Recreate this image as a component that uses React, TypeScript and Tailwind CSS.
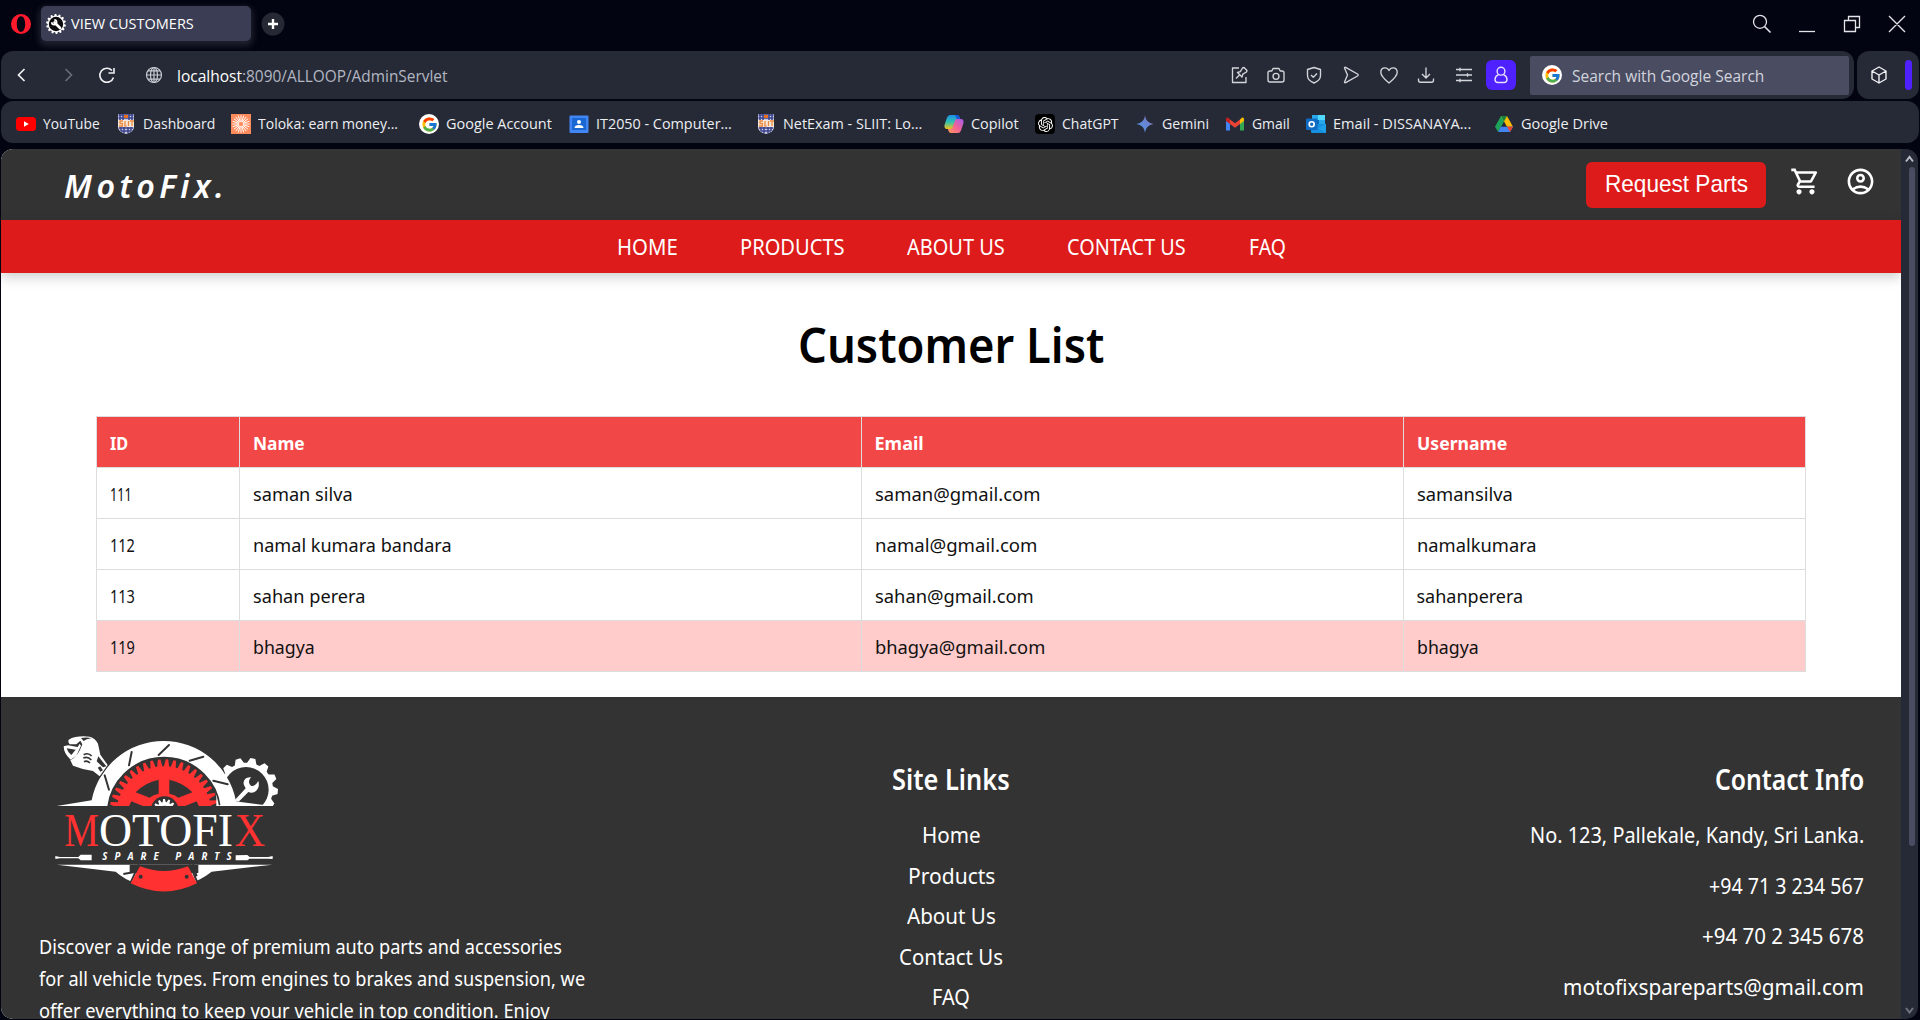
import React, { useLayoutEffect, useRef, useState } from "react";
import { MdOutlineShoppingCart, MdOutlineAccountCircle } from "react-icons/md";
import { FcGoogle } from "react-icons/fc";
import { SiOpenai } from "react-icons/si";

/* Condenses or widens one line of text so that it fills the given width. */
function Fit({ w, children, className = "" }: { w: number; children: React.ReactNode; className?: string }) {
  const ref = useRef<HTMLSpanElement>(null);
  const [k, setK] = useState(1);
  useLayoutEffect(() => {
    if (ref.current) setK(w / ref.current.offsetWidth);
  }, [w]);
  return (
    <span className={`inline-block shrink-0 whitespace-nowrap ${className}`} style={{ width: w }}>
      <span ref={ref} className="inline-block origin-left" style={{ transform: `scaleX(${k})` }}>
        {children}
      </span>
    </span>
  );
}

const toothRing = (cx: number, cy: number, r1: number, r2: number, n: number, from = 0, to = 360) => {
  const pts: string[] = [];
  const step = (to - from) / n;
  for (let i = 0; i < n; i++) {
    const a = from + i * step;
    const corners: [number, number][] = [[0, r1], [0.22, r2], [0.55, r2], [0.75, r1]];
    for (const [f, r] of corners) {
      const t = ((a + f * step) * Math.PI) / 180;
      pts.push(`${(cx + r * Math.cos(t)).toFixed(2)},${(cy + r * Math.sin(t)).toFixed(2)}`);
    }
  }
  return pts.join(" ");
};

function GoogleBadge() {
  return (
    <span className="flex size-5 items-center justify-center rounded-full bg-white">
      <FcGoogle size={17} />
    </span>
  );
}

function Crest() {
  return (
    <svg width="20" height="20" viewBox="0 0 20 20">
      <path d="M2 0h16v13q0 5-8 7-8-2-8-7z" fill="#c9cbe0" />
      <path d="M2.500 1h15M2.500 4h15M3 14h14M5 17h10M4 0v6M7 0v6M13 0v6M16 0v6M5 13v4M8 13v6M12 13v6M15 13v4" stroke="#3a438d" strokeWidth="1.500" />
      <path d="M8 1h4v3H8z" fill="#e8701c" />
      <path d="M2 6h16v7H2z" fill="#f6e7dc" />
      <path d="M7 7H4v2.500h2.500V12H3M9 7v5h1.500M12.500 7v5M14 7h4M16 7v5" stroke="#e88a3d" strokeWidth="1.300" fill="none" />
    </svg>
  );
}

const YouTube = () => (
  <svg width="20" height="20" viewBox="0 0 20 20">
    <rect y="3" width="20" height="14" rx="3.500" fill="#f00" />
    <path d="M8 7.200v5.600l4.800-2.800z" fill="#fff" />
  </svg>
);
const Toloka = () => (
  <svg width="20" height="20" viewBox="0 0 20 20">
    <path fill="#ff8a5c" d="M0 0h20v20H0z" />
    {Array.from({ length: 20 }, (_, i) => (
      <path key={i} d="M10 7.800V1.200" stroke="#fff" strokeWidth=".9" transform={`rotate(${i * 18} 10 10)`} />
    ))}
  </svg>
);
const Classroom = () => (
  <svg width="20" height="20" viewBox="0 0 20 20">
    <rect x=".5" y="1.500" width="19" height="17.500" rx="1" fill="#4285f4" />
    <path d="M3 4h14v12H3z" fill="#1967d2" />
    <circle cx="10" cy="8" r="2" fill="#fff" />
    <path d="M5.500 14q0-3 4.500-3t4.500 3z" fill="#fff" />
  </svg>
);
const Copilot = () => (
  <svg width="20" height="20" viewBox="0 0 20 20">
    <defs>
      <linearGradient id="cpA" x1="0" y1="0" x2="0" y2="1">
        <stop stopColor="#1d8fe8" />
        <stop offset=".5" stopColor="#2fc3b0" />
        <stop offset="1" stopColor="#f3c21b" />
      </linearGradient>
      <linearGradient id="cpB" x1="1" y1="0" x2="0" y2="1">
        <stop stopColor="#a35cf0" />
        <stop offset=".5" stopColor="#f0619a" />
        <stop offset="1" stopColor="#ff9a55" />
      </linearGradient>
    </defs>
    <path d="M6 1h7q2 0 2.500 2l.6 2H14q-2 0-2.600 2L9 13.500Q8.500 15 7 15H3Q0 15 .5 11L3 3.500Q4 1 6 1z" fill="url(#cpA)" />
    <path d="M11 1h2q2 0 2.500 2l.6 2H13z" fill="#1557d6" />
    <path d="M14 19H7q-2 0-2.500-2L4 15h2.500q1.600 0 2.200-2L11 6.500Q11.500 5 13 5h4q3 0 2.500 4L17 16.500Q16 19 14 19z" fill="url(#cpB)" />
  </svg>
);
const ChatGpt = () => (
  <span className="flex size-5 items-center justify-center rounded bg-black text-white">
    <SiOpenai size={15} />
  </span>
);
const Gemini = () => (
  <svg width="20" height="20" viewBox="0 0 20 20">
    <defs>
      <linearGradient id="gm" x1="0" y1="1" x2="1" y2="0">
        <stop stopColor="#4a9be8" />
        <stop offset=".6" stopColor="#6a83d0" />
        <stop offset="1" stopColor="#b06a9c" />
      </linearGradient>
    </defs>
    <path d="M10 1.500Q11 9 18.500 10 11 11 10 18.500 9 11 1.500 10 9 9 10 1.500z" fill="url(#gm)" />
  </svg>
);
const Gmail = () => (
  <svg width="20" height="20" viewBox="0 0 20 20">
    <path d="M1 5v11.500h4V9z" fill="#4285f4" />
    <path d="M19 5v11.500h-4V9z" fill="#34a853" />
    <path d="M15 5.500V10l4-3V5q0-1.800-1.800-1.500z" fill="#fbbc04" />
    <path d="M1 5v2l4 3V5.500L2.800 3.500Q1 3.200 1 5z" fill="#c5221f" />
    <path d="M5 5.500V10l5 3.700 5-3.700V5.500l-5 3.800z" fill="#ea4335" />
  </svg>
);
const Outlook = () => (
  <svg width="20" height="20" viewBox="0 0 20 20">
    <path d="M6 1h13v10H6z" fill="#28a8ea" />
    <path d="M12 1h7v5h-7z" fill="#50d9ff" />
    <path d="M6 6h7v5H6z" fill="#0364b8" />
    <path d="M5 10h15v9H6q-1 0-1-1z" fill="#1490df" />
    <path d="M20 9.500 12 14.500l8 4.500z" fill="#1f9fe8" />
    <rect y="4.500" width="11.500" height="11.500" rx="1" fill="#0f6cc4" />
    <circle cx="5.700" cy="10.200" r="2.500" stroke="#fff" strokeWidth="1.600" fill="none" />
  </svg>
);
const Drive = () => (
  <svg width="20" height="20" viewBox="0 0 20 20">
    <path d="M7 2h6L10 7.500 4.200 18 1 12.800z" fill="#1ea35a" />
    <path d="M7 2h6l6 10.800h-6z" fill="#fbbc04" />
    <path d="M7 2h6l-3 5.500z" fill="#188038" />
    <path d="M6.800 12.800H19L16 18H4.200z" fill="#4285f4" />
    <path d="M13 12.800h6L16 18z" fill="#ea4335" />
  </svg>
);

const bookmarks = [
  { label: "YouTube", w: 57, box: "w-[100px]", icon: <YouTube /> },
  { label: "Dashboard", w: 72, box: "w-[115px]", icon: <Crest /> },
  { label: "Toloka: earn money...", w: 140, box: "w-[188px]", icon: <Toloka /> },
  { label: "Google Account", w: 106, box: "w-[150px]", icon: <GoogleBadge /> },
  { label: "IT2050 - Computer...", w: 136, box: "w-[187px]", icon: <Classroom /> },
  { label: "NetExam - SLIIT: Lo...", w: 139, box: "w-[188px]", icon: <Crest /> },
  { label: "Copilot", w: 48, box: "w-[91px]", icon: <Copilot /> },
  { label: "ChatGPT", w: 57, box: "w-[100px]", icon: <ChatGpt /> },
  { label: "Gemini", w: 47, box: "w-[90px]", icon: <Gemini /> },
  { label: "Gmail", w: 38, box: "w-[81px]", icon: <Gmail /> },
  { label: "Email - DISSANAYA...", w: 138, box: "w-[188px]", icon: <Outlook /> },
  { label: "Google Drive", w: 87, box: "w-[130px]", icon: <Drive /> },
];

const toolPaths = [
  "M9 2H2.500v14.500H16V11M6 12.500l3.500-3.500M7.500 6.500l4.500 4.500.8-2.800L16.500 6l.5-1.500-3-3L12.500 2 10.300 5.700z",
  "M1 7q0-2 2-2h1.800L6 2.500h6L13.200 5H15q2 0 2 2v7q0 2-2 2H3q-2 0-2-2zM12 10.300a3 3 0 1 1-6 0 3 3 0 0 1 6 0z",
  "M9 1.500 15.500 3.500V9.500q0 5-6.500 7.500-6.500-2.500-6.500-7.500V3.500zM6 9l2.300 2.300L12 7.500",
  "M2.500 2q0-1 1.200-.6L15.500 8q1.500 1 0 2L3.700 16.600Q2.500 17 2.500 16L5.500 9z",
  "M9 17Q.8 10.500.8 6.300.8 1.800 5 1.800q2.700 0 4 2.700 1.300-2.700 4-2.700 4.200 0 4.200 4.500Q17.200 10.500 9 17z",
  "M9 1.500v10M5 8l4 4 4-4M1.500 12.500v1.800Q1.500 16.200 3.500 16.200h11q2 0 2-1.900V12.500",
  "M1 3.500h16M1 9h16M1 14.500h16M5 1.800v3.400M12.500 7.300v3.400M5 12.800v3.400",
];

function Browser() {
  return (
    <div className="font-['Open_Sans','Noto_Sans',sans-serif]">
      <div className="flex h-[51px] items-start">
        <svg className="mt-[14px] ml-[11px]" width="20" height="20" viewBox="0 0 20 20">
          <path fillRule="evenodd" fill="#ff1b2d" d="M10 0a10 10 0 1 0 0 20 10 10 0 0 0 0-20zm0 2.200c2.600 0 4.200 3.400 4.200 7.800s-1.600 7.800-4.200 7.800S5.800 14.400 5.800 10 7.400 2.200 10 2.200z" />
        </svg>
        <div className="mt-[6px] ml-[10px] flex h-[35px] w-[210px] items-center rounded-[5px] bg-[#3a3d53] pl-[5px] text-[14.5px] leading-[35px] text-white shadow-[0_3px_6px_2px_#20222f]">
          <svg className="mr-[5px] shrink-0" width="20" height="20" viewBox="0 0 20 20">
            <polygon points={toothRing(10, 10, 8.3, 10, 14)} fill="#fff" />
            <circle cx="10" cy="10" r="7.200" fill="#0a0a0c" />
            <path d="M8.500 8.500 14 14" stroke="#fff" strokeWidth="2.600" strokeLinecap="round" />
            <path d="M5.800 8.200a2.400 2.400 0 1 0 2.500-2.400" stroke="#fff" strokeWidth="1.700" fill="none" />
          </svg>
          <Fit w={123}>VIEW CUSTOMERS</Fit>
        </div>
        <svg className="mt-3 ml-[10px]" width="24" height="24" viewBox="0 0 24 24">
          <circle cx="12" cy="12" r="11.500" fill="#262934" />
          <path d="M12 7v10M7 12h10" stroke="#fff" strokeWidth="2.400" />
        </svg>
        <svg className="ml-auto mr-[14px] mt-[14px]" width="154" height="20" viewBox="0 0 154 20" fill="none" stroke="#e4e5ea" strokeWidth="1.300">
          <circle cx="8" cy="7.800" r="6.500" />
          <path d="m12.500 12.500 6 6" strokeWidth="1.600" />
          <path d="M47 17.500h16" />
          <path d="M92.500 6.500h11v11h-11zM96.500 6.500v-4h11v11h-4M137 2l16 16M153 2l-16 16" />
        </svg>
      </div>

      <div className="flex h-12 gap-[3px] px-px">
        <div className="flex grow items-center rounded-xl bg-[#262a36] pr-[5px]">
          <svg className="ml-[11px]" width="160" height="20" viewBox="0 0 160 20" fill="none" strokeWidth="1.700" stroke="#f0f1f4">
            <path d="M12.500 4 6.500 10l6 6" />
            <path d="m53.500 4 6 6-6 6" stroke="#686c79" />
            <path d="M101.500 12.500A7 7 0 1 1 100 5.500M102 3v5h-5.500" strokeWidth="1.600" />
            <g stroke="#c8cbd2" strokeWidth="1.200">
              <circle cx="142" cy="10" r="7.500" />
              <ellipse cx="142" cy="10" rx="3.500" ry="7.500" />
              <path d="M134.500 10h15M136 5.800h12M136 14.200h12M142 2.500v15" />
            </g>
          </svg>
          <div className="mt-px ml-[5px] flex text-[16px] text-[#b3b7c3]">
            <Fit w={65} className="text-white">localhost</Fit>
            <Fit w={205}>:8090/ALLOOP/AdminServlet</Fit>
          </div>
          <div className="mr-[13.500px] ml-auto flex gap-[19.500px]">
            {toolPaths.map((d) => (
              <svg key={d} width="18" height="18" viewBox="0 0 18 18" fill="none" stroke="#d3d5da" strokeWidth="1.350" strokeLinejoin="round">
                <path d={d} />
              </svg>
            ))}
          </div>
          <div className="flex size-[30px] items-center justify-center rounded-md bg-[#4f21ff]">
            <svg width="16" height="18" viewBox="0 0 16 18" fill="none" stroke="#e6e0ff" strokeWidth="1.400">
              <circle cx="8" cy="5.200" r="3.900" />
              <path d="M5.500 8.600Q2 10.300 2 13.500q0 3 3 3h6q3 0 3-3 0-3.200-3.500-4.900" />
            </svg>
          </div>
          <div className="ml-[14px] flex h-[39px] w-[319px] items-center gap-[10px] rounded-[2px] bg-[#4a4d62] pl-3 text-[16px] text-[#d2d4dd]">
            <GoogleBadge />
            <Fit w={192} className="mt-px">Search with Google Search</Fit>
          </div>
        </div>
        <div className="flex w-[62px] items-center justify-between rounded-xl bg-[#262a36] pr-[7px] pl-[13px]">
          <svg width="18" height="18" viewBox="0 0 18 18" fill="none" stroke="#f0f1f4" strokeWidth="1.400" strokeLinejoin="round">
            <path d="m9 1 7 4v8l-7 4-7-4V5zM2 5l7 4 7-4M9 9v8" />
          </svg>
          <span className="h-[30px] w-[7px] rounded-full bg-[#4f21ff]" />
        </div>
      </div>

      <div className="mx-px mt-[2px] flex h-[42px] items-center rounded-xl bg-[#262a36] pl-[15px] text-[15px] leading-[42px] text-[#eceef2]">
        {bookmarks.map((b) => (
          <div key={b.label} className={`flex shrink-0 items-center gap-[6.500px] ${b.box}`}>
            <span className="mt-1">{b.icon}</span>
            <Fit w={b.w} className="mt-0.5">{b.label}</Fit>
          </div>
        ))}
      </div>
    </div>
  );
}

function Logo() {
  return (
    <svg className="ml-[14.500px] block" width="226.67" height="160" viewBox="70 70 680 480">
      <defs>
        <clipPath id="top"><path d="M70 70h680v219H70z" /></clipPath>
      </defs>
      <g clipPath="url(#top)">
        <path d="M75 290 186 272A220 220 0 0 1 618 272L734 290z" fill="#fff" />
        <circle cx="403" cy="313" r="169" fill="#333" />
        <polygon points={toothRing(403, 313, 143, 164, 44, 0, 360)} fill="#ff3131" />
        <path d="M318 248Q345 219 387 210V252Q370 255 360 264zM488 248Q461 219 419 210V252Q436 255 446 264z" fill="#333" />
        <path d="M298 290 305 275 342 290zM508 290 501 275 464 290z" fill="#333" />
        <circle cx="405" cy="302" r="42" fill="#333" />
        <polygon points={toothRing(405, 304, 27, 36, 14)} fill="#fff" />
        <circle cx="405" cy="306" r="18" fill="#333" />
        <polygon points={toothRing(651, 238, 79, 94, 13, -6, 354)} fill="#fff" />
        <circle cx="649" cy="240" r="68" fill="#333" />
        <path d="M590 200A220 220 0 0 1 619 274L640 290H560V200z" fill="#fff" />
        <circle cx="403" cy="313" r="169" fill="none" stroke="#333" strokeWidth="5" />
        <path d="M615 272 648 236Q634 216 650 205L664 202Q652 219 664 228 676 232 686 214 692 235 676 246 666 252 656 247L627 276z" fill="#fff" />
        <path d="M610 274 734 290H560z" fill="#fff" />
      </g>
      <path d="M306 127 298 167M418 106 387 136M521 141 480 153M551 213 594 224M225 197 238 240" stroke="#333" strokeWidth="6" strokeLinecap="round" />
      <g transform="translate(78 60)">
        <path d="M39 30Q62 17 102 21 119 26 127 42L134 75 158 108 132 146 112 124Q82 120 52 108L44 92Q22 76 23 50L39 42z" fill="#333" />
        <path d="M39 30Q62 17 102 21 119 26 127 42L134 75 156 106 132 140 112 124Q82 120 52 108L44 92Q68 80 80 44L74 33 62 44H42Q36 38 39 30z" fill="#fff" />
        <path d="M24 50 37 47 66 52 72 42 76 48 62 78 45 90Q24 72 24 50z" fill="#fff" />
        <path d="M33 56 60 60 47 76Q36 68 33 56z" fill="#333" />
        <path d="M76 25Q95 22 107 26 91 28 84 34z" fill="#333" />
        <path d="M84 75Q98 68 108 79M83 85Q96 79 107 91M85 96Q94 91 103 100" stroke="#333" strokeWidth="5" fill="none" />
        <path d="M128 80 152 110 142 113 123 95z" fill="#333" />
        <path d="m130 112 8 12" stroke="#333" strokeWidth="9" />
      </g>
      <g fontFamily="'Liberation Serif', serif" fontSize="141">
        <text x="104" y="408" textLength="104" lengthAdjust="spacingAndGlyphs" fill="#ff3131">M</text>
        <text x="208" y="408" textLength="402" lengthAdjust="spacingAndGlyphs" fill="#fff">OTOFI</text>
        <text x="615" y="408" textLength="91" lengthAdjust="spacingAndGlyphs" fill="#ff3131">X</text>
      </g>
      <text x="218" y="452" textLength="388" fill="#fff" fontFamily="'Open Sans', sans-serif" fontSize="29" fontWeight="700" fontStyle="italic">SPARE PARTS</text>
      <g fill="#fff">
        <path d="M77 439 90 442H146L153 435H186V452H153L146 446H90L77 448zM729 439 716 442H660L653 436 618 437V452H653L660 447H716L729 448z" />
        <path d="M82 465H728L546 486Q482 535 403 535 310 532 258 486z" />
      </g>
      <path d="M300 465H506V490H300z" fill="#333" />
      <path d="M328 464 300 525M480 464 506 525M490 464 501 500M281 493 315 487" stroke="#333" strokeWidth="6" />
      <path d="M331 470Q403 498 475 470L502 521Q403 570 303 521z" fill="#ff3131" />
      <circle cx="333" cy="501" r="6" fill="#333" />
      <circle cx="471" cy="501" r="6" fill="#333" />
    </svg>
  );
}

const customers = [
  { id: "111", iw: 22, name: "saman silva", nw: 100, mail: "saman@gmail.com", mw: 165, user: "samansilva", uw: 96 },
  { id: "112", iw: 25, name: "namal kumara bandara", nw: 199, mail: "namal@gmail.com", mw: 162, user: "namalkumara", uw: 120 },
  { id: "113", iw: 25, name: "sahan perera", nw: 112, mail: "sahan@gmail.com", mw: 159, user: "sahanperera", uw: 107 },
  { id: "119", iw: 25, name: "bhagya", nw: 62, mail: "bhagya@gmail.com", mw: 170, user: "bhagya", uw: 62 },
];

const cell = "flex items-center border-r border-b border-[#ddd] pt-[2px] pl-[12.500px]";
const grid = "grid h-[51px] grid-cols-[143px_622px_542px_402px]";

function CustomerTable() {
  return (
    <div className="ml-[95px] w-[1710px] border-t border-l border-[#ddd] text-[18px] text-[#111]">
      <div className={`${grid} bg-[#f24747] font-bold text-white`}>
        <div className={cell}><Fit w={18}>ID</Fit></div>
        <div className={cell}><Fit w={52}>Name</Fit></div>
        <div className={cell}><Fit w={49}>Email</Fit></div>
        <div className={cell}><Fit w={90}>Username</Fit></div>
      </div>
      {customers.map((c) => (
        <div key={c.id} className={`${grid} ${c.id === "119" ? "bg-[#ffcbcb]" : "bg-white"}`}>
          <div className={cell}><Fit w={c.iw}>{c.id}</Fit></div>
          <div className={cell}><Fit w={c.nw}>{c.name}</Fit></div>
          <div className={cell}><Fit w={c.mw}>{c.mail}</Fit></div>
          <div className={cell}><Fit w={c.uw}>{c.user}</Fit></div>
        </div>
      ))}
    </div>
  );
}

function Footer() {
  return (
    <footer className="mt-[25px] flex h-[330px] justify-between bg-[#333] text-[22px] text-white">
      <div className="w-[600px] pt-[36px] pl-[37.500px]">
        <Logo />
        <div className="mt-[38px] flex flex-col text-[19px] leading-8">
          <Fit w={523}>Discover a wide range of premium auto parts and accessories</Fit>
          <Fit w={546}>for all vehicle types. From engines to brakes and suspension, we</Fit>
          <Fit w={511}>offer everything to keep your vehicle in top condition. Enjoy</Fit>
        </div>
      </div>
      <div className="flex w-[700px] flex-col items-center pt-[62px] leading-[40.600px]">
        <Fit w={118} className="mb-[15px] text-[28px] leading-[40px] font-semibold">Site Links</Fit>
        <Fit w={59}>Home</Fit>
        <Fit w={87}>Products</Fit>
        <Fit w={89}>About Us</Fit>
        <Fit w={104}>Contact Us</Fit>
        <Fit w={38}>FAQ</Fit>
      </div>
      <div className="flex w-[600px] flex-col items-end pt-[62px] pr-[37px] leading-[50.600px]">
        <Fit w={149} className="mb-[10px] text-[28px] leading-[40px] font-semibold">Contact Info</Fit>
        <Fit w={334}>No. 123, Pallekale, Kandy, Sri Lanka.</Fit>
        <Fit w={155}>+94 71 3 234 567</Fit>
        <Fit w={162}>+94 70 2 345 678</Fit>
        <Fit w={301}>motofixspareparts@gmail.com</Fit>
      </div>
    </footer>
  );
}

export default function App() {
  return (
    <div className="flex h-[1020px] w-[1920px] flex-col overflow-hidden bg-[#020411]">
      <Browser />
      <div className="mx-px mt-[6px] mr-[2px] mb-px flex h-[870px] overflow-hidden rounded-xl bg-[#262a36]">
        <main className="h-full w-[1900px] shrink-0 overflow-hidden bg-white font-['Noto_Sans',sans-serif]">
          <header className="flex h-[71px] bg-[#333] text-white">
            <div className="mt-[12px] ml-[63px] text-[33px] leading-[50px] font-semibold italic">
              <Fit w={164} className="tracking-[0.14em]">MotoFix.</Fit>
            </div>
            <button className="mt-[13px] ml-auto h-[46px] w-[180px] rounded-md bg-[#de1b1b] pb-[3px] font-['Liberation_Sans',sans-serif] text-[24px]">
              <Fit w={143}>Request Parts</Fit>
            </button>
            <MdOutlineShoppingCart className="mt-[16.500px] ml-[24px]" size={31} />
            <MdOutlineAccountCircle className="mt-[16.500px] mr-[25px] ml-[24px]" size={31} />
          </header>
          <nav className="flex h-[53px] bg-[#de1b1b] pl-[616px] text-[22px] leading-[52px] text-white shadow-[0_4px_12px_rgba(0,0,0,0.2)]">
            <Fit w={61} className="mr-[62px]">HOME</Fit>
            <Fit w={105} className="mr-[62px]">PRODUCTS</Fit>
            <Fit w={98} className="mr-[62px]">ABOUT US</Fit>
            <Fit w={119} className="mr-[63px]">CONTACT US</Fit>
            <Fit w={37}>FAQ</Fit>
          </nav>
          <h1 className="flex h-[143px] justify-center pt-[42px] text-[48px] leading-[60px] font-semibold text-black">
            <Fit w={306}>Customer List</Fit>
          </h1>
          <CustomerTable />
          <Footer />
        </main>
        <div className="flex grow flex-col items-center text-[#b9bbc4]">
          <svg className="mt-1.5 shrink-0" width="9" height="8" viewBox="0 0 9 8" fill="none" stroke="currentColor" strokeWidth="2"><path d="M1 6.500 4.500 2 8 6.500" /></svg>
          <div className="mt-1 ml-1 h-[679px] w-[6px] shrink-0 rounded-full bg-[#4a4d62]" />
          <svg className="mt-auto mb-[5px] shrink-0 text-[#707380]" width="9" height="7" viewBox="0 0 9 7" fill="none" stroke="currentColor" strokeWidth="2"><path d="M1 1 4.500 5.500 8 1" /></svg>
        </div>
      </div>
    </div>
  );
}
